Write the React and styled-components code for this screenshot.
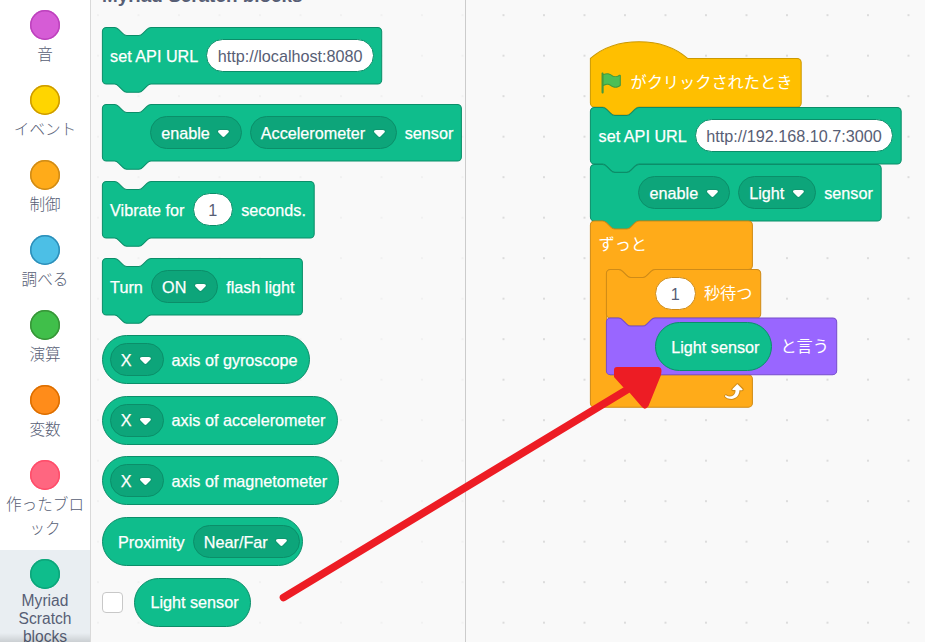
import React from "react";
import styled, { createGlobalStyle } from "styled-components";

const SCALE = 1.0125;
const SANS = '"Liberation Sans", "Noto Sans CJK JP", sans-serif';

const GlobalStyle = createGlobalStyle`
  *, *::before, *::after { box-sizing: border-box; }
  body { margin: 0; background: #f9f9f9; }
`;

const themes = {
  ext: { fill: "#0FBD8C", stroke: "#0B8E69", field: "#0DA57A" },
  events: { fill: "#FFBF00", stroke: "#CC9900", field: "#FFBF00" },
  control: { fill: "#FFAB19", stroke: "#CF8B17", field: "#FFAB19" },
  looks: { fill: "#9966FF", stroke: "#774DCB", field: "#9966FF" },
};

const NOTCH = "c2,0 3,1 4,2 l4,4 c1,1 2,2 4,2 h12 c2,0 3,-1 4,-2 l4,-4 c1,-1 2,-2 4,-2";
const NOTCH_BACK = "c-2,0 -3,1 -4,2 l-4,4 c-1,1 -2,2 -4,2 h-12 c-2,0 -3,-1 -4,-2 l-4,-4 c-1,-1 -2,-2 -4,-2";

const stackPath = (w, h) =>
  `M0,4 A4,4 0 0,1 4,0 H12 ${NOTCH} H${w - 4} a4,4 0 0,1 4,4 V${h - 4} a4,4 0 0,1 -4,4 H48 ${NOTCH_BACK} H4 a4,4 0 0,1 -4,-4 z`;
const hatPath = (w, h) =>
  `M0,0 c25,-22 71,-22 96,0 H${w - 4} a4,4 0 0,1 4,4 V${h - 4} a4,4 0 0,1 -4,4 H48 ${NOTCH_BACK} H4 a4,4 0 0,1 -4,-4 z`;
const loopPath = (w, head, body, foot) =>
  `M0,4 A4,4 0 0,1 4,0 H12 ${NOTCH} H${w - 4} a4,4 0 0,1 4,4 V${head - 4} a4,4 0 0,1 -4,4 H64 ${NOTCH_BACK} H20 a4,4 0 0,0 -4,4 V${head + body - 4} a4,4 0 0,0 4,4 H${w - 4} a4,4 0 0,1 4,4 V${head + body + foot - 4} a4,4 0 0,1 -4,4 H4 a4,4 0 0,1 -4,-4 z`;

/* ---------- page frame ---------- */

const Page = styled.main`
  position: relative;
  display: flex;
  width: 925px;
  height: 642px;
  overflow: hidden;
  font-family: ${SANS};
  background: #f9f9f9;
`;

const Sidebar = styled.nav`
  position: relative;
  flex: 0 0 90px;
  padding-top: 1px;
  background: #fff;
  overflow: hidden;
  &::after {
    content: "";
    position: absolute;
    inset: auto 0 0 0;
    height: 9px;
    background: linear-gradient(rgba(0, 0, 0, 0), rgba(0, 0, 0, 0.13));
  }
`;

const Category = styled.div`
  display: flex;
  flex-direction: column;
  align-items: center;
  gap: 3px;
  padding: 9px 3px;
  background: ${(p) => (p.$selected ? "#E9EEF2" : "transparent")};
`;

const Bubble = styled.span`
  width: 30px;
  height: 30px;
  border-radius: 50%;
  background: ${(p) => p.$fill};
  box-shadow: inset 0 0 0 1.5px ${(p) => p.$ring};
`;

const CategoryLabel = styled.span`
  color: #575e75;
  font-size: 15.6px;
  font-weight: ${(p) => (p.$latin ? 400 : 300)};
  line-height: ${(p) => (p.$latin ? 18 : 24)}px;
  text-align: center;
  white-space: pre;
`;

const dots = (color, x) => `
  background-image: radial-gradient(circle at 1px 1px, ${color} 0.9px, transparent 1.4px);
  background-size: 40.5px 40.5px;
  background-position: ${x}px 14.2px;
`;

const Palette = styled.section`
  flex: 0 0 376px;
  border: solid #ccc;
  border-color: #ccc #ccc #ccc #d9d9d9;
  border-width: 0 1px;
  padding-left: 11px;
  overflow: hidden;
  ${dots("#f1f1f1", 6)}
`;

const PaletteTitle = styled.h2`
  margin: -16px 0 0;
  height: 43px;
  color: #575e75;
  font-size: 18.9px;
  line-height: 24px;
  white-space: nowrap;
`;

const CommandList = styled.div`
  display: flex;
  flex-direction: column;
  align-items: flex-start;
  gap: 20px;
`;

const ReporterList = styled.div`
  display: flex;
  flex-direction: column;
  align-items: flex-start;
  gap: 11.7px;
  margin-top: 20px;
`;

const MonitorRow = styled.div`
  display: flex;
  align-items: center;
  gap: 11px;
`;

const Checkbox = styled.span`
  width: 21px;
  height: 21px;
  border: 1px solid #c8c8c8;
  border-radius: 4px;
  background: #fff;
`;

const Workspace = styled.section`
  flex: 1;
  padding: 58px 0 0 124px;
  ${dots("#dcdcdc", 36.5)}
`;

const Script = styled.div`
  display: flex;
  flex-direction: column;
  align-items: flex-start;
`;

/* ---------- blocks ---------- */

const BlockBox = styled.div`
  position: relative;
  display: flex;
  align-items: center;
  gap: 8.1px;
  width: ${(p) => p.$w}px;
  height: ${(p) => p.$h}px;
  padding-left: ${(p) => p.$pad}px;
`;

const ShapeSvg = styled.svg`
  position: absolute;
  left: 0;
  top: 0;
  width: 1px;
  height: 1px;
  overflow: visible;
`;

const Label = styled.span`
  position: relative;
  color: #fff;
  font-size: 16.2px;
  line-height: 20px;
  white-space: nowrap;
  -webkit-text-stroke: ${(p) => (p.$kana ? 0 : 0.25)}px #fff;
  padding-bottom: ${(p) => (p.$kana ? 1.5 : 0)}px;
`;

const TextField = styled.span`
  position: relative;
  display: flex;
  align-items: center;
  justify-content: center;
  width: ${(p) => p.$w}px;
  height: 33px;
  border: 1px solid ${(p) => themes[p.$tone].stroke};
  border-radius: 17px;
  background: #fff;
  color: #575e75;
  font-size: 16.2px;
  line-height: 20px;
  white-space: nowrap;
`;

const MenuField = styled.span`
  position: relative;
  display: flex;
  align-items: center;
  gap: 7.5px;
  width: ${(p) => p.$w}px;
  height: 33px;
  padding-left: 10.2px;
  border: 1px solid ${themes.ext.stroke};
  border-radius: 17px;
  background: ${themes.ext.field};
`;

const MenuArrow = styled.svg`
  flex: none;
  margin-top: 2px;
`;

const ReporterBox = styled.div`
  position: relative;
  display: flex;
  align-items: center;
  gap: 8.1px;
  width: ${(p) => p.$w}px;
  height: 49px;
  padding-left: ${(p) => p.$pad}px;
  border: 1px solid ${themes.ext.stroke};
  border-radius: 25px;
  background: ${themes.ext.fill};
`;

const LoopBox = styled.div`
  position: relative;
  display: flex;
  flex-direction: column;
  width: 163px;
  height: 187px;
`;

const LoopHead = styled.div`
  display: flex;
  align-items: center;
  height: 48px;
  padding-left: 8.5px;
`;

const LoopBody = styled.div`
  display: flex;
  flex-direction: column;
  height: 106px;
  margin-left: 16px;
`;

const LoopFoot = styled.div`
  position: relative;
  display: flex;
  align-items: flex-start;
  justify-content: flex-end;
  height: 33px;
  padding: 3.5px 9.2px 0 0;
`;

const Annotation = styled.svg`
  position: absolute;
  inset: 0;
  width: 925px;
  height: 642px;
  pointer-events: none;
`;

function Shape({ d, tone, y = 0.4 }) {
  return (
    <ShapeSvg>
      <path
        d={d}
        transform={`translate(0.4 ${y}) scale(${SCALE})`}
        fill={themes[tone].fill}
        stroke={themes[tone].stroke}
      />
    </ShapeSvg>
  );
}

function Block({ tone = "ext", w, h = 57, units = 56, pad = 8.1, hat, y, children }) {
  const d = (hat ? hatPath : stackPath)(w / SCALE, units);
  return (
    <BlockBox $w={w} $h={h} $pad={pad}>
      <Shape d={d} tone={tone} y={y} />
      {children}
    </BlockBox>
  );
}

function Menu({ w, children }) {
  return (
    <MenuField $w={w}>
      <Label>{children}</Label>
      <MenuArrow width="12.87" height="8.9" viewBox="0 0 12.71 8.79">
        <path
          fill="#231f20"
          opacity=".1"
          d="M12.71,2.44A2.41,2.41,0,0,1,12,4.16L8.08,8.08a2.45,2.45,0,0,1-3.45,0L.72,4.16A2.42,2.42,0,0,1,0,2.44,2.48,2.48,0,0,1,.71.71C1,.47,1.43,0,6.36,0S11.75.46,12,.71A2.44,2.44,0,0,1,12.71,2.44Z"
        />
        <path
          fill="#fff"
          d="M6.36,7.79a1.43,1.43,0,0,1-1-.42L1.42,3.45a1.44,1.44,0,0,1,0-2c.56-.56,9.31-.56,9.87,0a1.44,1.44,0,0,1,0,2L7.37,7.37A1.43,1.43,0,0,1,6.36,7.79Z"
        />
      </MenuArrow>
    </MenuField>
  );
}

function Input({ w, tone = "ext", children }) {
  return (
    <TextField $w={w} $tone={tone}>
      {children}
    </TextField>
  );
}

const FlagSvg = styled.svg`
  position: relative;
  flex: none;
  margin: 1px -0.6px 0 0.6px;
`;

function Flag() {
  return (
    <FlagSvg width="24.3" height="24.3" viewBox="0 0 24 24">
      <path
        fill="#45993D"
        d="M20.8,3.7c-0.4-0.2-0.9-0.1-1.2,0.2c-2,1.6-4.8,1.6-6.8,0c-2.3-1.9-5.6-2.3-8.3-1v-0.4c0-0.6-0.5-1-1-1s-1,0.4-1,1v18.8c0,0.5,0.5,1,1,1h0.1c0.5,0,1-0.5,1-1v-6.4c1-0.7,2.1-1.2,3.4-1.3c1.2,0,2.4,0.4,3.4,1.2c2.9,2.3,7,2.3,9.8,0c0.3-0.2,0.4-0.5,0.4-0.9V4.7C21.6,4.2,21.3,3.8,20.8,3.7z"
      />
      <path
        fill="#4CBF56"
        d="M20.5,13.9C18,16,14.4,16,11.9,13.9c-1.1-0.9-2.5-1.4-4-1.4c-1.2,0.1-2.3,0.5-3.4,1.1V4c2.5-1.4,5.5-1.1,7.7,0.6c2.4,1.9,5.7,1.9,8.1,0h0.2V13.9z"
      />
    </FlagSvg>
  );
}

function RepeatIcon() {
  return (
    <svg width="24.3" height="24.3" viewBox="0 0 24 24">
      <path
        fill="#CF8B17"
        d="M23.3,11c-0.3,0.6-0.9,1-1.5,1h-1.6c-0.1,1.3-0.5,2.5-1.1,3.6c-0.9,1.7-2.3,3.2-4.1,4.1c-1.7,0.9-3.6,1.2-5.5,0.9c-1.8-0.3-3.5-1.1-4.9-2.3c-0.7-0.7-0.7-1.9,0-2.6c0.6-0.6,1.6-0.7,2.3-0.2H7c0.9,0.6,1.9,0.9,2.9,0.9s1.9-0.3,2.7-0.9c1.1-0.8,1.8-2.1,1.8-3.5h-1.5c-0.9,0-1.7-0.7-1.7-1.7c0-0.4,0.2-0.9,0.5-1.2l4.4-4.4c0.7-0.6,1.7-0.6,2.4,0L23,9.2C23.5,9.7,23.6,10.4,23.3,11z"
      />
      <path
        fill="#fff"
        d="M21.8,11h-2.6c0,1.5-0.3,2.9-1,4.2c-0.8,1.6-2.1,2.8-3.7,3.6c-1.5,0.8-3.3,1.1-4.9,0.8c-1.6-0.2-3.2-1-4.4-2.1c-0.4-0.3-0.4-0.9-0.1-1.2c0.3-0.4,0.9-0.4,1.2-0.1l0,0c1,0.7,2.2,1.1,3.4,1.1s2.3-0.3,3.3-1c0.9-0.6,1.6-1.5,2-2.6c0.3-0.9,0.4-1.8,0.2-2.8h-2.4c-0.4,0-0.7-0.3-0.7-0.7c0-0.2,0.1-0.3,0.2-0.4l4.4-4.4c0.3-0.3,0.7-0.3,0.9,0L22,9.8c0.3,0.3,0.4,0.6,0.3,0.9S22,11,21.8,11z"
      />
    </svg>
  );
}

const categories = [
  { label: "音", fill: "#D65CD6", ring: "#BD42BD" },
  { label: "イベント", fill: "#FFD500", ring: "#CC9900" },
  { label: "制御", fill: "#FFAB19", ring: "#CF8B17" },
  { label: "調べる", fill: "#4CBFE6", ring: "#2E8EB8" },
  { label: "演算", fill: "#40BF4A", ring: "#389438" },
  { label: "変数", fill: "#FF8C1A", ring: "#DB6E00" },
  { label: "作ったブロ\nック", fill: "#FF6680", ring: "#FF4D6A" },
  { label: "Myriad\nScratch\nblocks", fill: "#0FBD8C", ring: "#0DA57A", selected: true },
];

const axes = [
  { label: "axis of gyroscope", w: 208 },
  { label: "axis of accelerometer", w: 236 },
  { label: "axis of magnetometer", w: 237.4 },
];

export default function App() {
  return (
    <Page>
      <GlobalStyle />
      <Sidebar>
        {categories.map((c) => (
          <Category key={c.label} $selected={c.selected}>
            <Bubble $fill={c.fill} $ring={c.ring} />
            <CategoryLabel $latin={c.selected}>{c.label}</CategoryLabel>
          </Category>
        ))}
      </Sidebar>

      <Palette>
        <PaletteTitle>Myriad Scratch blocks</PaletteTitle>
        <CommandList>
          <Block w={279.3}>
            <Label>set API URL</Label>
            <Input w={167.6}>http://localhost:8080</Input>
          </Block>
          <Block w={359} pad={48}>
            <Menu w={91.5}>enable</Menu>
            <Menu w={147}>Accelerometer</Menu>
            <Label>sensor</Label>
          </Block>
          <Block w={211.8}>
            <Label>Vibrate for</Label>
            <Input w={40.5}>1</Input>
            <Label>seconds.</Label>
          </Block>
          <Block w={200}>
            <Label>Turn</Label>
            <Menu w={67.2}>ON</Menu>
            <Label>flash light</Label>
          </Block>
        </CommandList>
        <ReporterList>
          {axes.map((a) => (
            <ReporterBox key={a.label} $w={a.w} $pad={6.5}>
              <Menu w={54}>X</Menu>
              <Label>{a.label}</Label>
            </ReporterBox>
          ))}
          <ReporterBox $w={201.4} $pad={15}>
            <Label>Proximity</Label>
            <Menu w={107.2}>Near/Far</Menu>
          </ReporterBox>
          <MonitorRow>
            <Checkbox />
            <ReporterBox $w={117.4} $pad={15.4}>
              <Label>Light sensor</Label>
            </ReporterBox>
          </MonitorRow>
        </ReporterList>
      </Palette>

      <Workspace>
        <Script>
          <Block tone="events" hat w={210.8} h={49} units={48}>
            <Flag />
            <Label $kana>がクリックされたとき</Label>
          </Block>
          <Block w={310.8} pad={8.6}>
            <Label>set API URL</Label>
            <Input w={198.4}>http://192.168.10.7:3000</Input>
          </Block>
          <Block w={290.8} pad={48.4}>
            <Menu w={91.5}>enable</Menu>
            <Menu w={78.2}>Light</Menu>
            <Label>sensor</Label>
          </Block>
          <LoopBox>
            <Shape tone="control" d={loopPath(160, 48, 104, 32)} y={-0.1} />
            <LoopHead>
              <Label $kana>ずっと</Label>
            </LoopHead>
            <LoopBody>
              <Block tone="control" w={154.3} h={49} units={48} pad={48.8}>
                <Input w={41} tone="control">1</Input>
                <Label $kana>秒待つ</Label>
              </Block>
              <Block tone="looks" w={230.3} pad={48.8} y={0}>
                <ReporterBox $w={117.5} $pad={15.4}>
                  <Label>Light sensor</Label>
                </ReporterBox>
                <Label $kana>と言う</Label>
              </Block>
            </LoopBody>
            <LoopFoot>
              <RepeatIcon />
            </LoopFoot>
          </LoopBox>
        </Script>
      </Workspace>

      <Annotation viewBox="0 0 925 642">
        <path d="M283.5 597.5L634 385.5" stroke="#ED1C24" strokeWidth="7.6" strokeLinecap="round" />
        <path
          fill="#ED1C24"
          d="M614 377V370Q614 367 617 367H658Q661.500 367 661.500 371L661 375L648.500 406Q645 411 641.500 406.500L629 392L623 387Z"
        />
      </Annotation>
    </Page>
  );
}
